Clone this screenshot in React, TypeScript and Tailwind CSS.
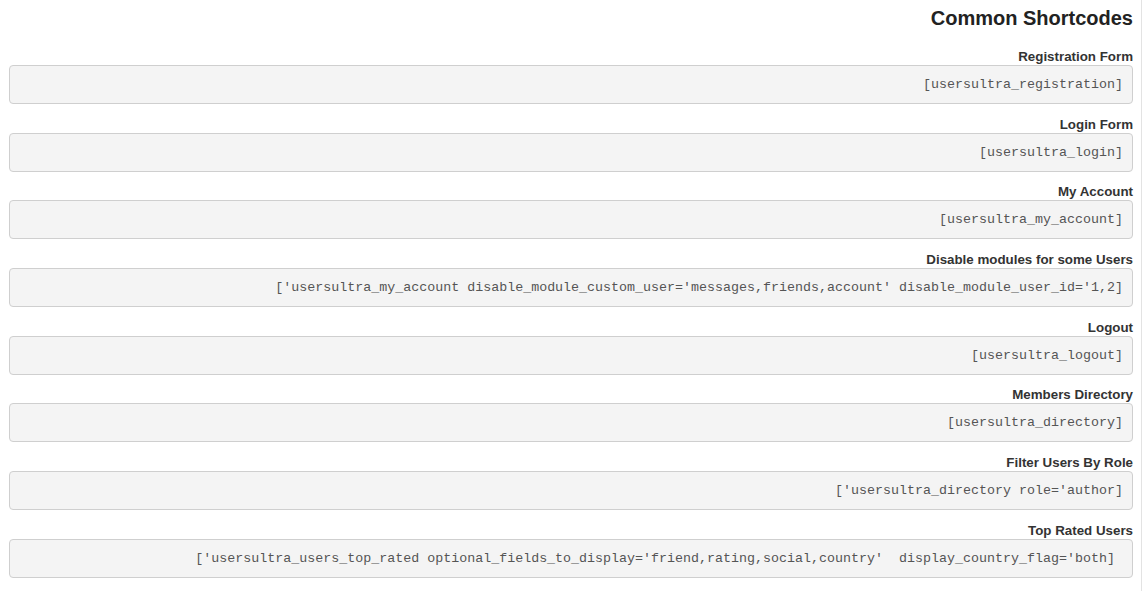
const shortcodes = [
  { label: 'Registration Form', code: '[usersultra_registration]' },
  { label: 'Login Form', code: '[usersultra_login]' },
  { label: 'My Account', code: '[usersultra_my_account]' },
  {
    label: 'Disable modules for some Users',
    code: "['usersultra_my_account disable_module_custom_user='messages,friends,account' disable_module_user_id='1,2]",
  },
  { label: 'Logout', code: '[usersultra_logout]' },
  { label: 'Members Directory', code: '[usersultra_directory]' },
  { label: 'Filter Users By Role', code: "['usersultra_directory role='author]" },
  {
    label: 'Top Rated Users',
    code: "['usersultra_users_top_rated optional_fields_to_display='friend,rating,social,country'  display_country_flag='both] ",
  },
];

const App = () => {
  return (
    <div className="min-h-screen w-[1142px] bg-white border-r border-[#e3e3e3] pl-[9px] pr-[8px] pt-[4px] font-['Liberation_Sans',Arial,sans-serif]">
      <h2 className="text-right text-[20px] leading-[28px] font-bold text-[#222] mb-[17px]">Common Shortcodes</h2>

      {shortcodes.map((item, idx) => (
        <div key={idx} className="mb-[12.7px]">
          <div className="text-right text-[13.33px] leading-[16px] font-bold text-[#333]">{item.label}</div>
          <div className="h-[39px] flex items-center justify-end pr-[9px] pt-[1px] bg-[#f4f4f4] border border-[#cfcfcf] rounded-[4px]">
            <span className="whitespace-pre text-[13.33px] text-[#555] font-['Liberation_Mono','Courier_New',monospace]">
              {item.code}
            </span>
          </div>
        </div>
      ))}
    </div>
  );
};

export default App;
